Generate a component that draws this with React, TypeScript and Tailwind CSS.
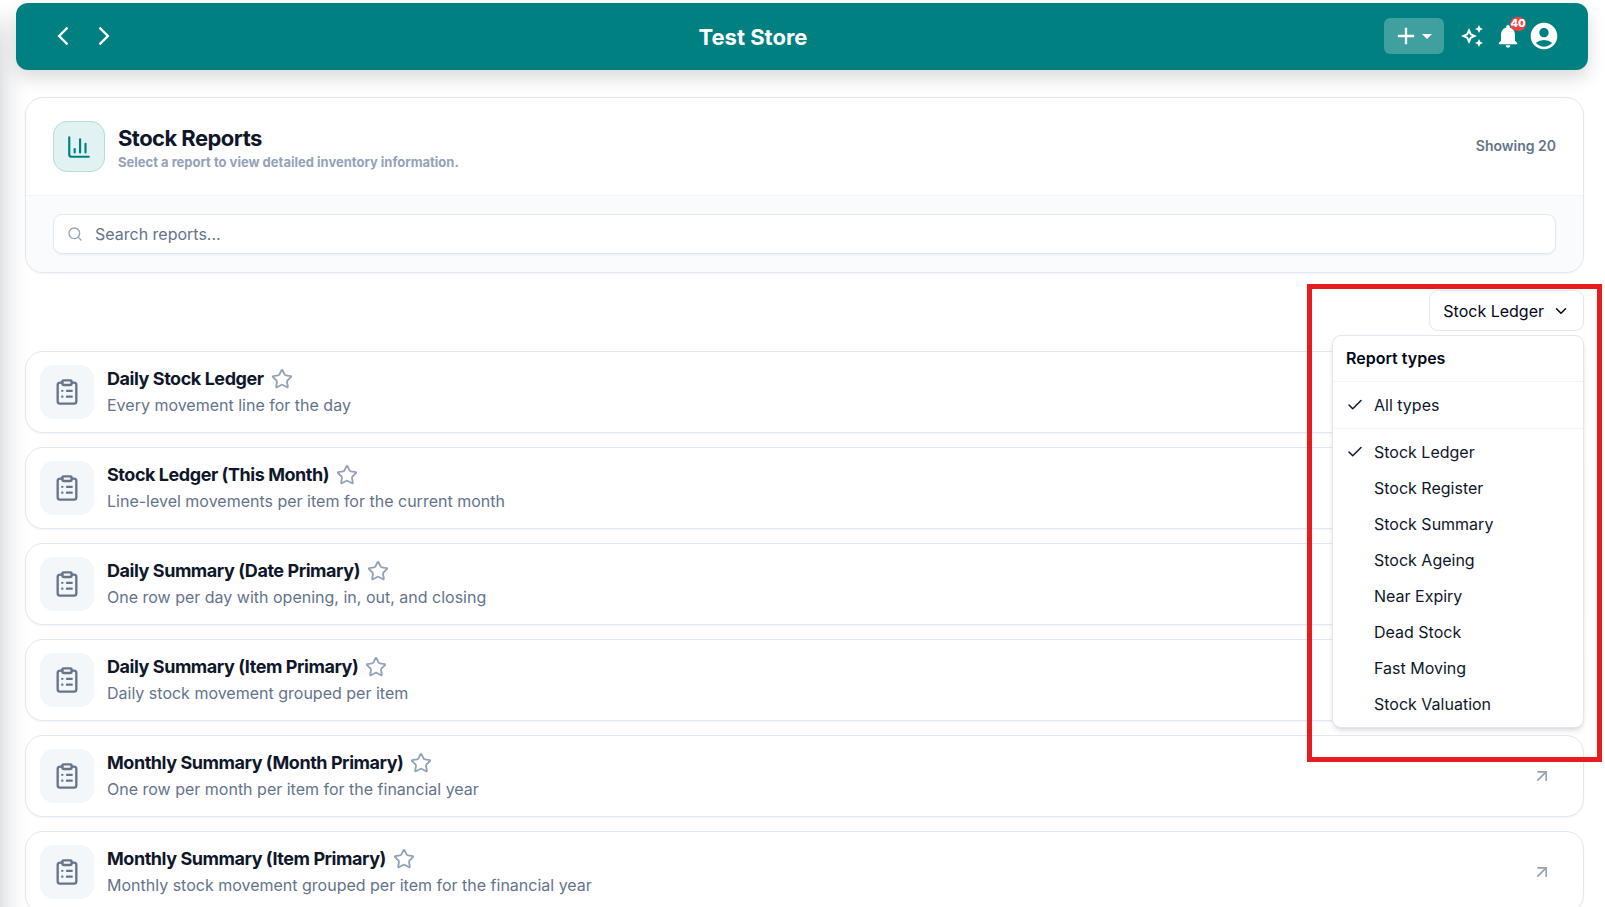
import { useState } from "react";
import {
  ArrowUpRight,
  ChartColumn,
  Check,
  ChevronDown,
  ClipboardList,
  Search,
  Star,
} from "lucide-react";
import {
  MdAccountCircle,
  MdAdd,
  MdArrowBackIosNew,
  MdArrowDropDown,
  MdArrowForwardIos,
  MdNotifications,
  MdOutlineAutoAwesome,
} from "react-icons/md";

const reports = [
  { title: "Daily Stock Ledger", description: "Every movement line for the day" },
  {
    title: "Stock Ledger (This Month)",
    description: "Line-level movements per item for the current month",
  },
  {
    title: "Daily Summary (Date Primary)",
    description: "One row per day with opening, in, out, and closing",
  },
  {
    title: "Daily Summary (Item Primary)",
    description: "Daily stock movement grouped per item",
  },
  {
    title: "Monthly Summary (Month Primary)",
    description: "One row per month per item for the financial year",
  },
  {
    title: "Monthly Summary (Item Primary)",
    description: "Monthly stock movement grouped per item for the financial year",
  },
];

const reportTypes = [
  "Stock Ledger",
  "Stock Register",
  "Stock Summary",
  "Stock Ageing",
  "Near Expiry",
  "Dead Stock",
  "Fast Moving",
  "Stock Valuation",
];

function TopBar() {
  return (
    <header className="relative mt-[3px] mr-[17px] ml-4 flex h-[67px] items-center justify-between rounded-xl bg-[#008080] pr-7 pb-0.5 pl-[29px] text-white shadow-[0_8px_18px_rgba(0,0,0,0.15)]">
      <nav aria-label="History" className="flex items-center gap-[5px]">
        <button type="button" aria-label="Back" className="flex size-9 items-center justify-center">
          <MdArrowBackIosNew className="size-[22px]" />
        </button>
        <button type="button" aria-label="Forward" className="flex size-9 items-center justify-center">
          <MdArrowForwardIos className="size-[22px]" />
        </button>
      </nav>
      <h1 className="pt-[3px] text-[22px] font-bold">Test Store</h1>
      <div className="flex items-center">
        <button
          type="button"
          aria-label="Create new"
          className="mr-4 flex h-9 w-[60px] items-center rounded-md bg-white/25 pl-2"
        >
          <MdAdd className="size-7" />
          <MdArrowDropDown className="-ml-[5px] size-6" />
        </button>
        <button type="button" aria-label="Assistant" className="mr-[10px] flex">
          <MdOutlineAutoAwesome className="size-6" />
        </button>
        <button type="button" aria-label="Notifications, 40 unread" className="relative mr-[6px] flex">
          <MdNotifications className="size-7" />
          <span className="absolute -top-[5px] -right-1 flex h-[14px] w-4 items-center justify-center rounded-full bg-[#ef4444] text-[11px] font-extrabold">
            40
          </span>
        </button>
        <button type="button" aria-label="Account" className="flex">
          <MdAccountCircle className="size-8" />
        </button>
      </div>
    </header>
  );
}

function ReportsPanel() {
  return (
    <section className="overflow-hidden rounded-[18px] border border-[#e2e8f0] bg-white shadow-[0_1px_2px_rgba(15,23,42,0.05)]">
      <div className="flex items-center justify-between border-b border-[#f1f5f9] px-[27px] py-[23px]">
        <div className="flex items-center gap-[13px]">
          <div className="flex h-[51px] w-[52px] items-center justify-center rounded-[14px] border border-[#b2dfdb] bg-[#e0f2f1] text-[#008080]">
            <ChartColumn className="size-[26px]" />
          </div>
          <div className="pt-0.5">
            <h2 className="text-[22px] leading-7 font-bold tracking-tight text-[#0f172a]">
              Stock Reports
            </h2>
            <p className="text-[13px] leading-5 font-bold text-[#94a3b8]">
              Select a report to view detailed inventory information.
            </p>
          </div>
        </div>
        <p className="pb-0.5 text-[14px] font-semibold text-[#64748b]">Showing 20</p>
      </div>
      <div className="bg-[#fafbfd] px-[27px] py-[18px]">
        <label className="flex h-10 items-center gap-3 rounded-[9px] border border-[#e2e8f0] bg-white px-[13px] shadow-[0_1px_2px_rgba(15,23,42,0.06)]">
          <Search className="size-4 text-[#94a3b8]" />
          <input
            type="search"
            aria-label="Search reports"
            placeholder="Search reports..."
            className="h-full flex-1 bg-transparent text-base outline-none placeholder:text-[#64748b]"
          />
        </label>
      </div>
    </section>
  );
}

type TypeOptionProps = {
  label: string;
  checked: boolean;
  onSelect: () => void;
};

function TypeOption({ label, checked, onSelect }: TypeOptionProps) {
  return (
    <button
      type="button"
      role="menuitemcheckbox"
      aria-checked={checked}
      onClick={onSelect}
      className="flex h-9 w-full items-center gap-[10px] px-[13px] text-left"
    >
      <span className="flex w-[18px]">{checked && <Check className="size-[18px]" />}</span>
      {label}
    </button>
  );
}

function TypeFilter() {
  const [open, setOpen] = useState(true);
  const [selected, setSelected] = useState("Stock Ledger");

  return (
    <div className="relative z-10">
      <button
        type="button"
        aria-haspopup="menu"
        aria-expanded={open}
        onClick={() => setOpen(!open)}
        className="flex h-[41px] items-center gap-2 rounded-[9px] border border-[#e2e8f0] bg-white px-[13px] text-base text-[#020817]"
      >
        {selected}
        <ChevronDown className="size-[18px]" />
      </button>
      {open && (
        <div
          role="menu"
          aria-label="Report types"
          className="absolute top-full right-0 mt-1 w-[252px] rounded-[9px] border border-[#e2e8f0] bg-white pt-1 pb-[5px] text-base text-[#0f172a] shadow-md"
        >
          <p className="flex h-9 items-center px-[13px] font-semibold text-[#020817]">Report types</p>
          <hr className="my-[5px] border-[#f1f5f9]" />
          <TypeOption label="All types" checked onSelect={() => setSelected("Stock Ledger")} />
          <hr className="my-[5px] border-[#f1f5f9]" />
          {reportTypes.map((type) => (
            <TypeOption
              key={type}
              label={type}
              checked={type === selected}
              onSelect={() => setSelected(type)}
            />
          ))}
        </div>
      )}
      {/* highlight frame around the filter */}
      <div className="pointer-events-none absolute -top-[6px] -right-[18px] h-[478px] w-[295px] border-5 border-[#e81c1e]" />
    </div>
  );
}

function ReportCard({ title, description }: { title: string; description: string }) {
  return (
    <li className="flex items-center gap-[13px] rounded-[18px] border border-[#e2e8f0] bg-white px-[14px] py-[13px] shadow-[0_1px_2px_rgba(15,23,42,0.05)]">
      <div className="flex size-[54px] shrink-0 items-center justify-center rounded-[14px] bg-[#f3f7fa] text-[#64748b]">
        <ClipboardList className="size-7" />
      </div>
      <div className="flex-1 pb-0.5">
        <div className="flex items-center gap-[7px]">
          <h3 className="text-[18px] leading-7 font-bold tracking-tight text-[#0f172a]">{title}</h3>
          <button type="button" aria-label={`Add ${title} to favourites`} className="text-[#94a3b8]">
            <Star className="size-[22px]" />
          </button>
        </div>
        <p className="text-base text-[#64748b]">{description}</p>
      </div>
      <a href="#" aria-label={`Open ${title}`} className="mr-[17px] text-[#94a3b8]">
        <ArrowUpRight className="size-5" />
      </a>
    </li>
  );
}

export default function App() {
  return (
    <div className="relative min-h-screen overflow-hidden bg-white font-['Inter',sans-serif]">
      {/* shadow cast by the collapsed sidebar */}
      <div className="absolute inset-y-0 right-full w-60 shadow-[0_24px_26px_rgba(15,23,42,0.24)]" />
      <TopBar />
      <main className="relative mt-[27px] mr-[21px] ml-[25px]">
        <ReportsPanel />
        <div className="mt-[17px] mb-5 flex justify-end">
          <TypeFilter />
        </div>
        <ul className="flex flex-col gap-[14px]">
          {reports.map((report) => (
            <ReportCard key={report.title} {...report} />
          ))}
        </ul>
      </main>
    </div>
  );
}
